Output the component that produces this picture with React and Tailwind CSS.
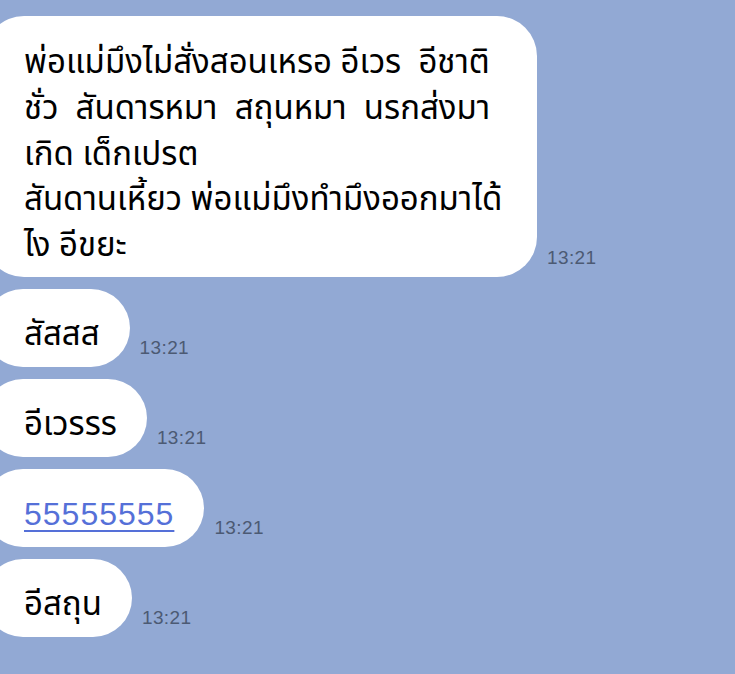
const font = { fontFamily: '"Noto Sans Thai", "Noto Sans", "DejaVu Sans", sans-serif' }

const messages = [
  { text: 'สัสสส' },
  { text: 'อีเวรรร' },
  { text: '55555555', link: true },
  { text: 'อีสถุน' },
]

const Time = () => (
  <span className="mb-[10px] ml-[10px] text-[19px] leading-none tracking-[0.4px] text-[#4c5a73] font-['Liberation_Sans',sans-serif]">
    13:21
  </span>
)

export default function App() {
  return (
    <div className="w-[735px] h-[674px] overflow-hidden bg-[#92a9d4]" style={font}>
      <div className="flex flex-col gap-3 pt-4">
        {/* long message */}
        <div className="flex items-end">
          <div className="-ml-4 w-[553px] rounded-[40px] bg-white pl-10 pr-6 pt-[25px] pb-[7px] text-[33px] leading-[45.75px] text-black whitespace-nowrap">
            พ่อแม่มึงไม่สั่งสอนเหรอ อีเวร&nbsp; อีชาติ
            <br />
            ชั่ว&nbsp; สันดารหมา&nbsp; สถุนหมา&nbsp; นรกส่งมา
            <br />
            เกิด เด็กเปรต
            <br />
            สันดานเหี้ยว พ่อแม่มึงทำมึงออกมาได้
            <br />
            ไง อีขยะ
          </div>
          <Time />
        </div>

        {messages.map((m, i) => (
          <div key={i} className="flex items-end">
            <div className="-ml-4 flex h-[78px] items-center rounded-[39px] bg-white pl-10 pr-[30px] text-[33px] whitespace-nowrap">
              {m.link ? (
                <span className="pt-[12px] text-[#5570d8] underline underline-offset-[5px] decoration-[1.5px] tracking-[1px] font-['Liberation_Sans',sans-serif] text-[32px]">
                  {m.text}
                </span>
              ) : (
                <span className="pt-[16px] text-black">{m.text}</span>
              )}
            </div>
            <Time />
          </div>
        ))}
      </div>
    </div>
  )
}
